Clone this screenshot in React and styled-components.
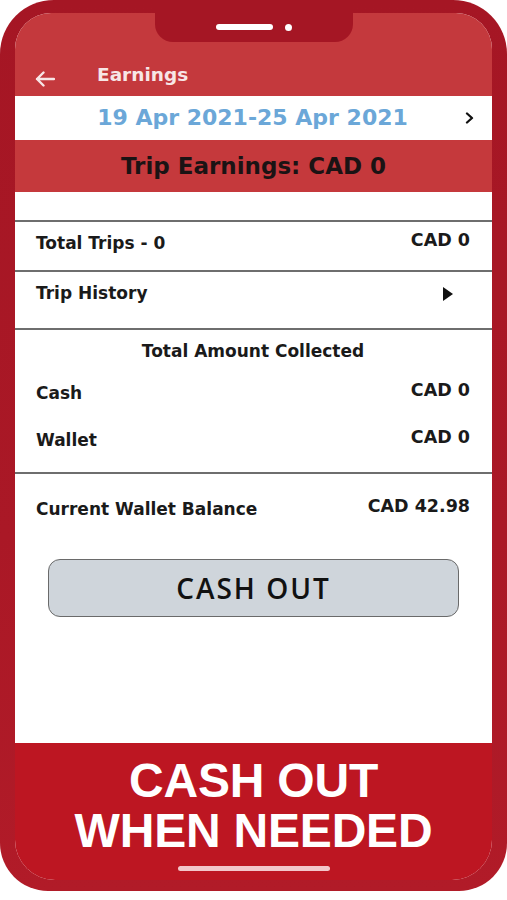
import React from 'react';
import styled, { createGlobalStyle } from 'styled-components';

const Global = createGlobalStyle`
  html, body { margin: 0; padding: 0; background: #ffffff; }
  body { font-family: "DejaVu Sans", "Liberation Sans", sans-serif; color: #1a1a1a; }
  * { box-sizing: border-box; }
`;

const Phone = styled.div`
  position: relative;
  width: 507px;
  height: 891px;
  background: linear-gradient(180deg, #a51624 0%, #aa1826 60%, #b11b28 100%);
  border-radius: 54px 54px 48px 48px;
  padding: 13px 15px 11px;
  display: flex;
`;

const Notch = styled.div`
  position: absolute;
  top: 0;
  left: 155px;
  width: 198px;
  height: 42px;
  background: #a51624;
  border-radius: 0 0 18px 18px;
  padding-top: 12px;
  display: flex;
  align-items: center;
  justify-content: center;
  gap: 12px;
`;

const Speaker = styled.span`
  width: 57px;
  height: 6px;
  border-radius: 3px;
  background: #ffffff;
`;

const Camera = styled.span`
  width: 7px;
  height: 7px;
  border-radius: 50%;
  background: #ffffff;
`;

const Screen = styled.div`
  flex: 1;
  display: flex;
  flex-direction: column;
  background: #ffffff;
  border-radius: 36px 36px 40px 40px;
  overflow: hidden;
`;

const Header = styled.header`
  height: 83px;
  background: #c4393d;
  display: flex;
  align-items: flex-end;
  padding: 0 0 9px 20px;
  gap: 42px;
  color: #f7e6e6;
`;

const HeaderTitle = styled.h1`
  margin: 0;
  font-size: 18.5px;
  line-height: 24px;
  font-weight: 700;
`;

const DateRow = styled.div`
  height: 44px;
  display: grid;
  grid-template-columns: 1fr auto 1fr;
  align-items: center;
  background: #ffffff;
`;

const DateText = styled.div`
  grid-column: 2;
  font-size: 22px;
  font-weight: 700;
  color: #6ba7d8;
  line-height: 26px;
  margin-left: -2px;
`;

const DateNext = styled.div`
  grid-column: 3;
  justify-self: end;
  padding-right: 18px;
  display: flex;
`;

const Band = styled.div`
  height: 52px;
  background: #c5393c;
  display: flex;
  align-items: center;
  justify-content: center;
  font-size: 23px;
  font-weight: 700;
  color: #1b1314;
  margin-bottom: 28px;
`;

const Section = styled.section`
  border-top: 2px solid #6e6e6e;
  height: ${p => p.$h}px;
  padding: ${p => p.$pt}px 22px 0 21px;
  display: flex;
  flex-direction: column;
`;

const Row = styled.div`
  display: flex;
  justify-content: space-between;
  align-items: flex-start;
  margin-top: ${p => p.$mt || 0}px;
`;

const Label = styled.span`
  font-size: 17px;
  line-height: 20px;
  font-weight: 700;
  color: #1a1a1a;
`;

const Value = styled.span`
  font-size: 17.5px;
  line-height: 20px;
  font-weight: 700;
  color: #1a1a1a;
  margin-top: -3px;
`;

const SectionTitle = styled.div`
  text-align: center;
  font-size: 17px;
  line-height: 20px;
  font-weight: 700;
  color: #1a1a1a;
`;

const Arrow = styled.span`
  display: flex;
  margin-top: 4px;
  margin-right: 17px;
`;

const CashOutButton = styled.button`
  margin: 40px 33px 0;
  height: 58px;
  border: 1.5px solid #6a6a6a;
  border-radius: 12px;
  background: #cfd5db;
  font-family: "Open Sans", "DejaVu Sans", sans-serif;
  font-size: 28px;
  font-weight: 600;
  letter-spacing: 2px;
  color: #111111;
  display: flex;
  align-items: center;
  justify-content: center;
  padding: 0;
`;

const Content = styled.div`
  flex: 1;
  display: flex;
  flex-direction: column;
`;

const Promo = styled.div`
  height: 137px;
  background: #bd1622;
  padding-top: 13px;
  display: flex;
  flex-direction: column;
  align-items: center;
`;

const PromoText = styled.div`
  font-family: "Liberation Sans", Arial, sans-serif;
  font-weight: 700;
  font-size: 48px;
  line-height: 50px;
  color: #ffffff;
  text-align: center;
  letter-spacing: -0.2px;
`;

const HomeBar = styled.span`
  margin-top: 10px;
  width: 152px;
  height: 5px;
  border-radius: 3px;
  background: #f3c6ca;
`;

const BackIcon = () => (
  <svg width="20" height="16" viewBox="0 0 20 16" fill="none">
    <path d="M19 8H2M8.5 1.5L2 8l6.5 6.5" stroke="#f7e6e6" strokeWidth="2.4" strokeLinecap="round" strokeLinejoin="round" />
  </svg>
);

const ChevronIcon = () => (
  <svg width="9" height="12" viewBox="0 0 9 12" fill="none">
    <path d="M2 1.5L7 6l-5 4.5" stroke="#111" strokeWidth="2.3" strokeLinecap="round" strokeLinejoin="round" />
  </svg>
);

const TriangleIcon = () => (
  <svg width="10" height="14" viewBox="0 0 10 14">
    <polygon points="0,0 10,7 0,14" fill="#111" />
  </svg>
);

export default function App() {
  return (
    <>
      <Global />
      <Phone>
        <Screen>
          <Header>
            <BackIcon />
            <HeaderTitle>Earnings</HeaderTitle>
          </Header>
          <Content>
            <DateRow>
              <DateText>19 Apr 2021-25 Apr 2021</DateText>
              <DateNext><ChevronIcon /></DateNext>
            </DateRow>
            <Band>Trip Earnings: CAD 0</Band>
            <Section $h={50} $pt={11}>
              <Row>
                <Label>Total Trips - 0</Label>
                <Value>CAD 0</Value>
              </Row>
            </Section>
            <Section $h={58} $pt={11}>
              <Row>
                <Label>Trip History</Label>
                <Arrow><TriangleIcon /></Arrow>
              </Row>
            </Section>
            <Section $h={144} $pt={11}>
              <SectionTitle>Total Amount Collected</SectionTitle>
              <Row $mt={22}>
                <Label>Cash</Label>
                <Value>CAD 0</Value>
              </Row>
              <Row $mt={27}>
                <Label>Wallet</Label>
                <Value>CAD 0</Value>
              </Row>
            </Section>
            <Section $h={47} $pt={25}>
              <Row>
                <Label>Current Wallet Balance</Label>
                <Value>CAD 42.98</Value>
              </Row>
            </Section>
            <CashOutButton>CASH OUT</CashOutButton>
          </Content>
          <Promo>
            <PromoText>CASH OUT<br />WHEN NEEDED</PromoText>
            <HomeBar />
          </Promo>
        </Screen>
        <Notch>
          <Speaker />
          <Camera />
        </Notch>
      </Phone>
    </>
  );
}
